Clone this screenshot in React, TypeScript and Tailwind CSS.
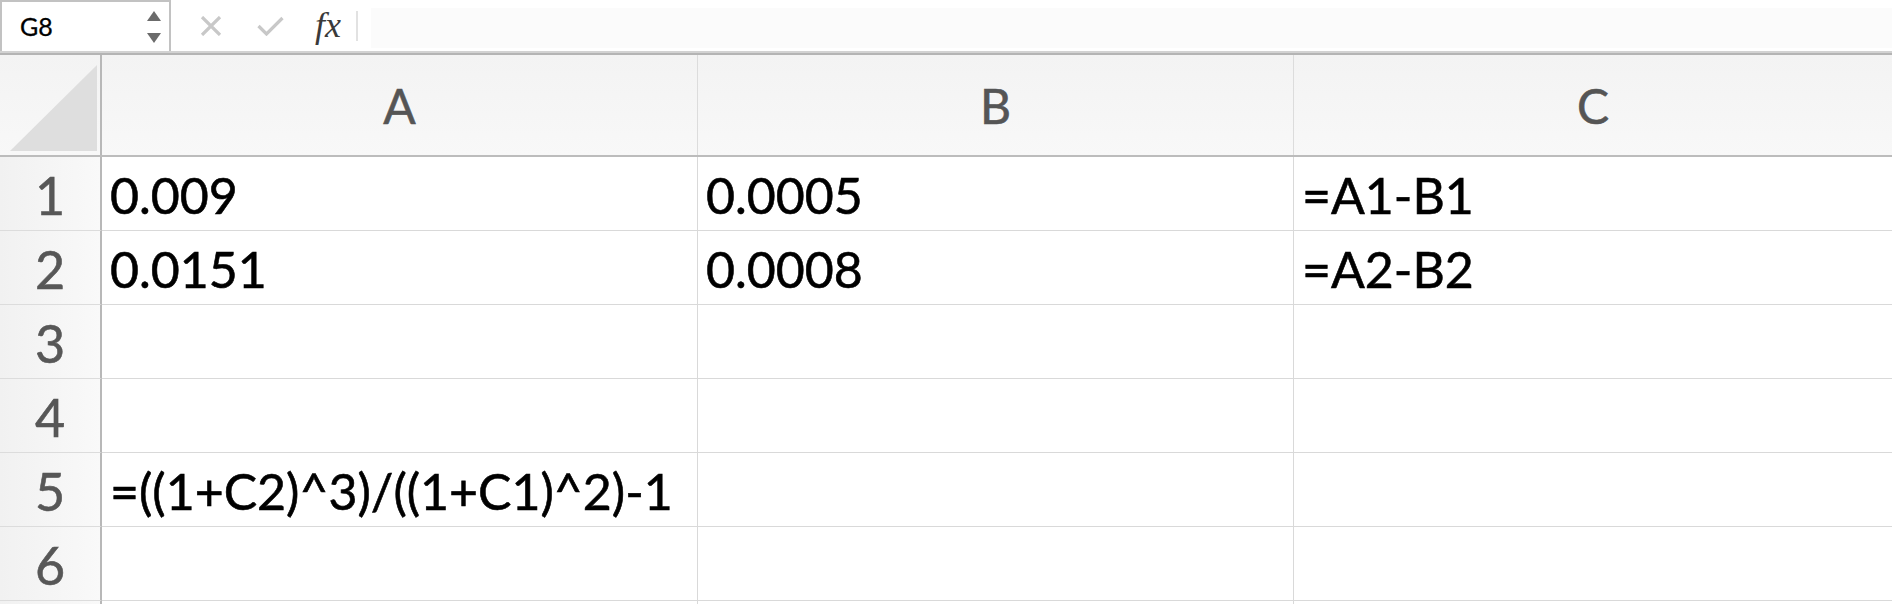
import React from "react";

const rows: { n: number | null; a: string; b: string; c: string }[] = [
  { n: 1, a: "0.009", b: "0.0005", c: "=A1-B1" },
  { n: 2, a: "0.0151", b: "0.0008", c: "=A2-B2" },
  { n: 3, a: "", b: "", c: "" },
  { n: 4, a: "", b: "", c: "" },
  { n: 5, a: "=((1+C2)^3)/((1+C1)^2)-1", b: "", c: "" },
  { n: 6, a: "", b: "", c: "" },
  { n: null, a: "", b: "", c: "" },
];

function FormulaBar() {
  return (
    <div className="flex h-[51px] bg-white">
      {/* name box */}
      <div className="flex h-[51px] w-[171px] shrink-0 items-center justify-between border-l-2 border-r-2 border-t-2 border-[#c2c2c2] pl-[18px] pr-[8px]">
        <span className="text-[25px] leading-none text-black [-webkit-text-stroke:0.3px_black]">G8</span>
        <div className="flex flex-col items-center gap-[12px] pt-[1px]">
          <svg width="14" height="10" viewBox="0 0 14 10">
            <polygon points="7,0 14,10 0,10" fill="#6b6b6b" />
          </svg>
          <svg width="14" height="10" viewBox="0 0 14 10">
            <polygon points="0,0 14,0 7,10" fill="#6b6b6b" />
          </svg>
        </div>
      </div>
      <div className="flex items-center">
        <svg className="ml-[29px]" width="22" height="20" viewBox="0 0 22 20">
          <path d="M2 1 L20 19 M20 1 L2 19" stroke="#c8c8c8" strokeWidth="3.2" />
        </svg>
        <svg className="ml-[35px]" width="27" height="20" viewBox="0 0 27 20">
          <path d="M1.5 10 L9.5 18 L25.5 2" stroke="#c8c8c8" strokeWidth="3.2" fill="none" />
        </svg>
        <span className="ml-[31px] -mt-[1px] text-[36px] italic leading-none text-[#3a3a3a] [font-family:'Liberation_Serif',serif]">
          fx
        </span>
        <div className="ml-[15px] h-[30px] w-[2px] bg-[#e2e2e2]" />
      </div>
      <div className="ml-[13px] mt-[8px] h-[40px] flex-1 bg-[#fbfbfb]" />
    </div>
  );
}

export default function App() {
  return (
    <div className="h-[604px] w-full overflow-hidden bg-white [font-family:Lato,'Open_Sans',sans-serif]">
      <FormulaBar />
      <div className="h-[2px] bg-[#d2d2d2]" />
      <div className="h-[2px] bg-[#b4b4b4]" />

      {/* column headers */}
      <div className="flex h-[102px] border-b-2 border-[#bcbcbc] bg-gradient-to-b from-[#f3f3f3] to-[#f8f8f8]">
        <div className="flex w-[102px] shrink-0 items-end justify-center border-r-2 border-[#b8b8b8] pb-[4px] pl-[8px]">
          <svg width="88" height="86" viewBox="0 0 88 86">
            <polygon points="0,86 87,0 87,86" fill="#dedede" />
          </svg>
        </div>
        {["A", "B", "C"].map((col, i) => (
          <div
            key={col}
            className={`flex items-center justify-center text-[48px] leading-none text-[#555555] [-webkit-text-stroke:0.6px_#555555] ${
              i < 2 ? "w-[596px] shrink-0 border-r border-[#dcdcdc]" : "flex-1"
            }`}
          >
            <span className="pt-[2px]">{col}</span>
          </div>
        ))}
      </div>

      {/* rows */}
      {rows.map((r, idx) => (
        <div key={idx} className="flex h-[74px]">
          <div className="flex w-[102px] shrink-0 items-center justify-center border-b border-r-2 border-b-[#dcdcdc] border-r-[#b8b8b8] bg-gradient-to-r from-[#f1f1f1] to-[#f9f9f9] text-[52px] leading-none text-[#575757] [-webkit-text-stroke:0.6px_#575757]">
            <span className="pt-[2px]">{r.n}</span>
          </div>
          {[r.a, r.b, r.c].map((v, i) => (
            <div
              key={i}
              className={`flex items-center border-b border-[#d9d9d9] pl-[8px] text-[50px] leading-none whitespace-nowrap text-black [-webkit-text-stroke:0.6px_black] ${
                i < 2 ? "w-[596px] shrink-0 border-r" : "flex-1"
              }`}
            >
              <span className="pt-[2px]">{v}</span>
            </div>
          ))}
        </div>
      ))}
    </div>
  );
}
